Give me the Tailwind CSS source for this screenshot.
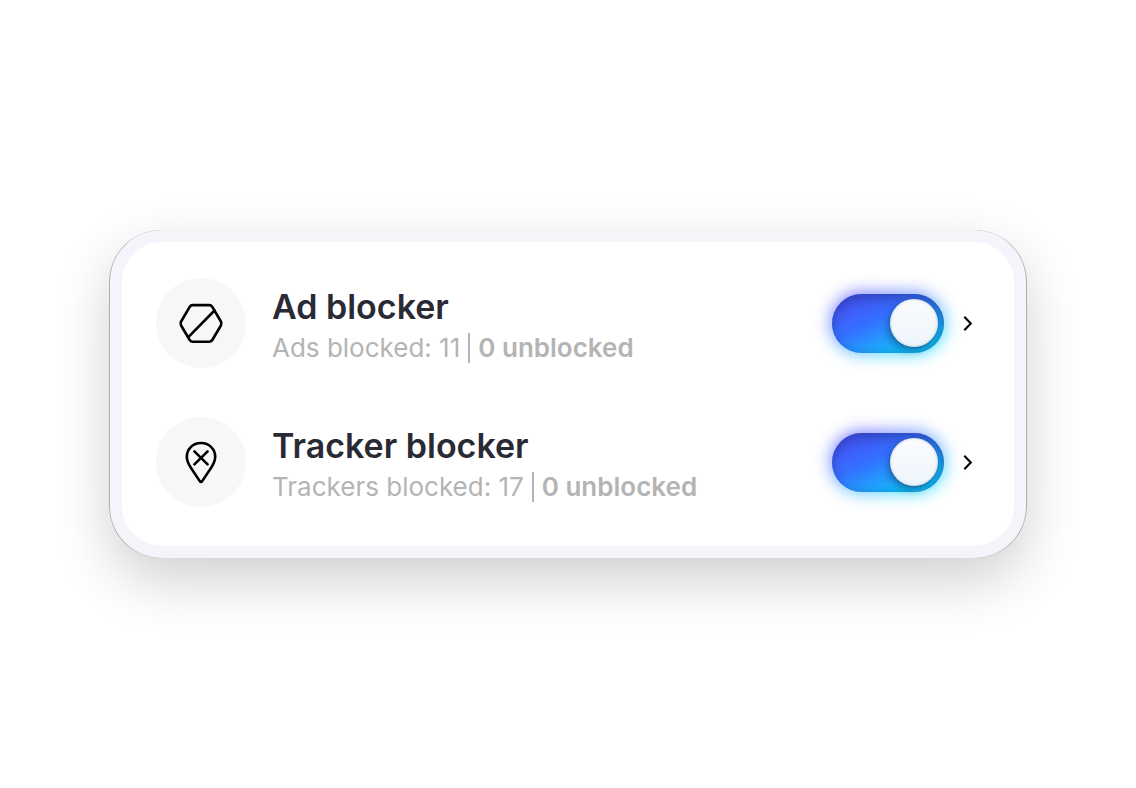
<!DOCTYPE html>
<html lang="en">
<head>
    <meta charset="UTF-8">
    <meta name="viewport" content="width=device-width, initial-scale=1.0">
    <title>Blockers</title>
    <script src="https://cdn.jsdelivr.net/npm/@tailwindcss/browser@4"></script>
</head>
<body class="bg-white font-['Inter',sans-serif]">
    <main class="min-h-screen flex items-center px-[110px]">
        <div class="w-full bg-white border-12 border-[#f4f5fa] rounded-[52px] px-[34px] pt-9 pb-[39px] flex flex-col gap-[49px] shadow-[1px_0_0_#00000040,-1px_0_0_#00000040,0_22px_56px_#00000030]">

            <!-- Ad blocker -->
            <section class="flex items-center">
                <div class="size-[90px] shrink-0 rounded-full bg-[#f7f7f7] flex items-center justify-center">
                    <svg class="size-12" viewBox="0 0 48 48" fill="none" stroke="#000" stroke-width="2.6" stroke-linecap="round" stroke-linejoin="round" aria-hidden="true">
                        <path d="M15.8 6.1H32.2Q34.2 6.1 35.3 7.9L43.9 22.5Q45 24.5 43.9 26.5L35.3 41Q34.2 42.8 32.2 42.8H15.8Q13.8 42.8 12.7 41L4.1 26.5Q3 24.5 4.1 22.5L12.7 7.9Q13.8 6.1 15.8 6.1Z"/>
                        <path d="M37.5 11.5L11.8 37.6"/>
                    </svg>
                </div>
                <div class="ml-[26px] flex-1 pt-[7px]">
                    <h2 id="ads-title" class="text-[34px] leading-[42px] font-semibold text-[#2a2a35]">Ad blocker</h2>
                    <p class="flex items-center gap-2 text-[26px] leading-10 text-[#b4b4b4]">
                        <span>Ads blocked: 11</span>
                        <span class="w-0.5 h-[30px] bg-[#b4b4b4]"></span>
                        <span class="font-semibold">0 unblocked</span>
                    </p>
                </div>
                <div class="relative isolate w-28 h-[59px] shrink-0">
                    <span class="absolute -inset-0.5 -z-10 rounded-full bg-linear-160 from-[#5a50ff] from-10% via-[#5a98ff] via-45% to-[#2fdcff] to-80% opacity-80 blur-[8px]"></span>
                    <input type="checkbox" role="switch" checked aria-labelledby="ads-title" class="block appearance-none w-full h-full rounded-full cursor-pointer bg-linear-155 from-[#4456fa] from-15% via-[#3370ff] via-42% to-[#12bcfa] to-80% shadow-[inset_0_6px_12px_#1a2f7060,inset_-3px_0_7px_#1a306030] before:absolute before:top-[5px] before:left-1.5 before:size-12 before:rounded-full before:bg-linear-to-b before:from-[#fbfcfe] before:to-[#edf5fc] before:shadow-[0_1px_2px_#1c3a6680,-3px_4px_6px_#10306060,inset_0_0_3px_#8898a890] checked:before:left-[58px]">
                </div>
                <button type="button" aria-label="Ad blocker details" class="ml-3 cursor-pointer">
                    <svg class="size-6" viewBox="0 0 24 24" fill="none" stroke="#000" stroke-width="2.1" aria-hidden="true">
                        <path d="M8.3 5.8L14.8 12.5L8.3 19.2"/>
                    </svg>
                </button>
            </section>

            <!-- Tracker blocker -->
            <section class="flex items-center">
                <div class="size-[90px] shrink-0 rounded-full bg-[#f7f7f7] flex items-center justify-center">
                    <svg class="size-12" viewBox="0 0 48 48" fill="none" stroke="#000" stroke-width="2.6" stroke-linecap="round" stroke-linejoin="round" aria-hidden="true">
                        <path d="M24 5C15.6 5 9.8 11.2 9.8 18.8C9.8 22.8 11.6 26.4 14 30L22.8 43.1Q24 44.6 25.2 43.1L34 30C36.4 26.4 38.2 22.8 38.2 18.8C38.2 11.2 32.4 5 24 5Z"/>
                        <path d="M17.4 13.4L30.6 26.4M30.6 13.4L17.4 26.4"/>
                    </svg>
                </div>
                <div class="ml-[26px] flex-1 pt-[7px]">
                    <h2 id="trackers-title" class="text-[34px] leading-[42px] font-semibold text-[#2a2a35]">Tracker blocker</h2>
                    <p class="flex items-center gap-2 text-[26px] leading-10 text-[#b4b4b4]">
                        <span>Trackers blocked: 17</span>
                        <span class="w-0.5 h-[30px] bg-[#b4b4b4]"></span>
                        <span class="font-semibold">0 unblocked</span>
                    </p>
                </div>
                <div class="relative isolate w-28 h-[59px] shrink-0">
                    <span class="absolute -inset-0.5 -z-10 rounded-full bg-linear-160 from-[#5a50ff] from-10% via-[#5a98ff] via-45% to-[#2fdcff] to-80% opacity-80 blur-[8px]"></span>
                    <input type="checkbox" role="switch" checked aria-labelledby="trackers-title" class="block appearance-none w-full h-full rounded-full cursor-pointer bg-linear-155 from-[#4456fa] from-15% via-[#3370ff] via-42% to-[#12bcfa] to-80% shadow-[inset_0_6px_12px_#1a2f7060,inset_-3px_0_7px_#1a306030] before:absolute before:top-[5px] before:left-1.5 before:size-12 before:rounded-full before:bg-linear-to-b before:from-[#fbfcfe] before:to-[#edf5fc] before:shadow-[0_1px_2px_#1c3a6680,-3px_4px_6px_#10306060,inset_0_0_3px_#8898a890] checked:before:left-[58px]">
                </div>
                <button type="button" aria-label="Tracker blocker details" class="ml-3 cursor-pointer">
                    <svg class="size-6" viewBox="0 0 24 24" fill="none" stroke="#000" stroke-width="2.1" aria-hidden="true">
                        <path d="M8.3 5.8L14.8 12.5L8.3 19.2"/>
                    </svg>
                </button>
            </section>
        </div>
    </main>
</body>
</html>
